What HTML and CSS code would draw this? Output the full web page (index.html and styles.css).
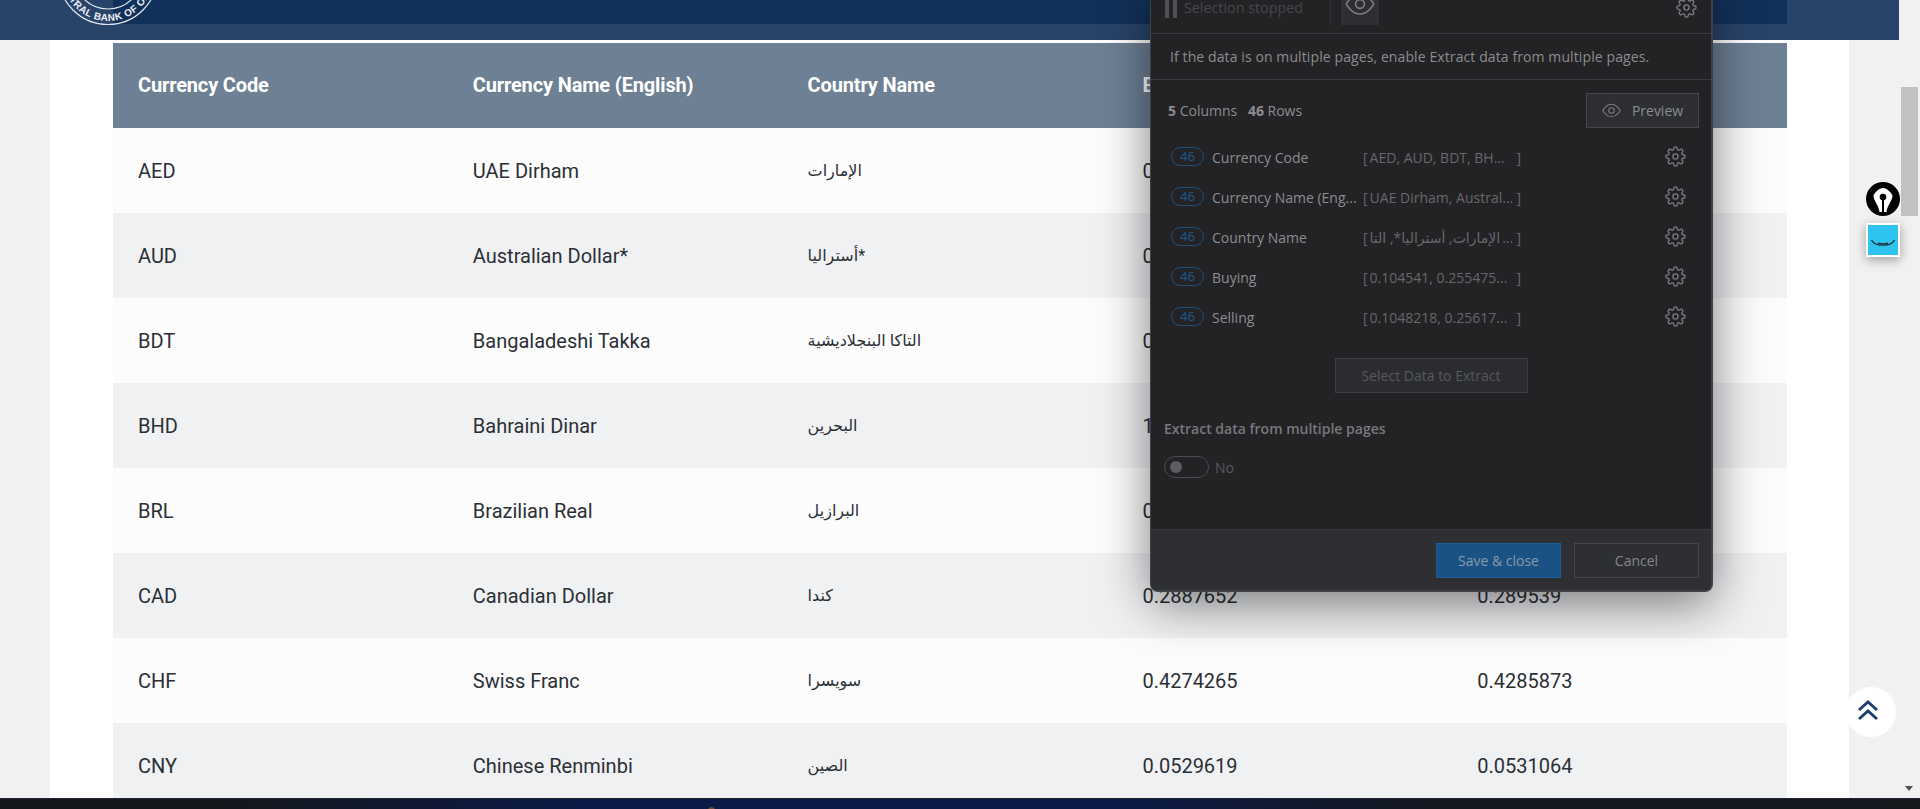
FILE: index.html
```html
<!DOCTYPE html>
<html lang="en">
<head>
<meta charset="utf-8">
<title>Exchange Rates</title>
<link rel="stylesheet" href="styles.css">
</head>
<body>
<div class="screen">
  <div class="viewport">
    <main class="page">
      <header class="topbar">
        <svg class="seal" viewBox="0 0 120 40" width="120" height="40" aria-hidden="true">
          <defs><path id="sealarc" d="M14 -25 A46 46 0 0 0 106 -25"/></defs>
          <circle cx="60" cy="-25" r="49.5" class="seal-ring"/>
          <circle cx="60" cy="-25" r="34" class="seal-ring"/>
          <text class="seal-text"><textPath href="#sealarc" startOffset="50%" text-anchor="middle">CENTRAL BANK OF OMAN</textPath></text>
        </svg>
        <div class="topbar-inner"></div>
      </header>
      <section class="sheet">
        <table class="rates">
          <thead>
            <tr><th>Currency Code</th><th>Currency Name (English)</th><th>Country Name</th><th>Buying</th><th>Selling</th></tr>
          </thead>
          <tbody>
            <tr><td>AED</td><td>UAE Dirham</td><td>الإمارات</td><td>0.104541</td><td>0.1048218</td></tr>
            <tr><td>AUD</td><td>Australian Dollar*</td><td>أستراليا*</td><td>0.255475</td><td>0.25617</td></tr>
            <tr><td>BDT</td><td>Bangaladeshi Takka</td><td>التاكا البنجلاديشية</td><td>0.0031</td><td>0.0032</td></tr>
            <tr><td>BHD</td><td>Bahraini Dinar</td><td>البحرين</td><td>1.0185</td><td>1.0212</td></tr>
            <tr><td>BRL</td><td>Brazilian Real</td><td>البرازيل</td><td>0.0702</td><td>0.0708</td></tr>
            <tr><td>CAD</td><td>Canadian Dollar</td><td>كندا</td><td>0.2887652</td><td>0.289539</td></tr>
            <tr><td>CHF</td><td>Swiss Franc</td><td>سويسرا</td><td>0.4274265</td><td>0.4285873</td></tr>
            <tr><td>CNY</td><td>Chinese Renminbi</td><td>الصين</td><td>0.0529619</td><td>0.0531064</td></tr>
          </tbody>
        </table>
      </section>
    </main>
    <aside class="scrollbar">
      <div class="thumb"></div>
      <div class="arrow-down"></div>
    </aside>
  </div>
  <footer class="taskbar"><span class="taskdot"></span></footer>

  <section class="modal">
    <div class="toolbar">
      <span class="pause"><i></i><i></i></span>
      <span class="stopped">Selection stopped</span>
      <span class="tooldiv"></span>
      <span class="eyebtn">
        <svg viewBox="0 0 24 24" width="30" height="30" class="ico ico-thin"><path d="M1 12s4-8 11-8 11 8 11 8-4 8-11 8-11-8-11-8z"/><circle cx="12" cy="12" r="3.5"/></svg>
      </span>
      <svg class="ico gear gear-top" viewBox="0 0 24 24" width="21" height="21"><use href="#gearshape"/></svg>
    </div>
    <div class="hint">If the data is on multiple pages, enable Extract data from multiple pages.</div>
    <div class="summary">
      <span class="counts"><b>5</b> Columns <b class="rows-n">46</b> Rows</span>
      <span class="preview">
        <svg viewBox="0 0 24 24" width="19" height="19" class="ico ico-thin"><path d="M1 12s4-8 11-8 11 8 11 8-4 8-11 8-11-8-11-8z"/><circle cx="12" cy="12" r="3.5"/></svg>
        Preview
      </span>
    </div>
    <ul class="fields">
      <li class="field"><span class="badge">46</span><span class="fname">Currency Code</span><span class="fvalue"><span>[</span><span class="ftext">AED, AUD, BDT, BH...</span><span>]</span></span><svg class="ico gear" viewBox="0 0 24 24" width="21" height="21"><use href="#gearshape"/></svg></li>
      <li class="field"><span class="badge">46</span><span class="fname">Currency Name (Eng...</span><span class="fvalue"><span>[</span><span class="ftext">UAE Dirham, Austral...</span><span>]</span></span><svg class="ico gear" viewBox="0 0 24 24" width="21" height="21"><use href="#gearshape"/></svg></li>
      <li class="field"><span class="badge">46</span><span class="fname">Country Name</span><span class="fvalue"><span>[</span><span class="ftext" dir="rtl">الإمارات, أستراليا*, التا</span><span class="fdots">...</span><span>]</span></span><svg class="ico gear" viewBox="0 0 24 24" width="21" height="21"><use href="#gearshape"/></svg></li>
      <li class="field"><span class="badge">46</span><span class="fname">Buying</span><span class="fvalue"><span>[</span><span class="ftext">0.104541, 0.255475...</span><span>]</span></span><svg class="ico gear" viewBox="0 0 24 24" width="21" height="21"><use href="#gearshape"/></svg></li>
      <li class="field"><span class="badge">46</span><span class="fname">Selling</span><span class="fvalue"><span>[</span><span class="ftext">0.1048218, 0.25617...</span><span>]</span></span><svg class="ico gear" viewBox="0 0 24 24" width="21" height="21"><use href="#gearshape"/></svg></li>
    </ul>
    <div class="selectwrap"><span class="selectbtn">Select Data to Extract</span></div>
    <div class="multi-title">Extract data from multiple pages</div>
    <div class="multi-toggle"><span class="switch"><i></i></span><span class="switch-label">No</span></div>
    <div class="modal-foot">
      <span class="btn btn-save">Save &amp; close</span>
      <span class="btn btn-cancel">Cancel</span>
    </div>
  </section>

  <svg class="defs" width="0" height="0" aria-hidden="true">
    <defs>
      <g id="gearshape"><circle cx="12" cy="12" r="3"/><path d="M19.4 15a1.65 1.65 0 0 0 .33 1.82l.06.06a2 2 0 0 1 0 2.83 2 2 0 0 1-2.83 0l-.06-.06a1.65 1.65 0 0 0-1.82-.33 1.65 1.65 0 0 0-1 1.51V21a2 2 0 0 1-2 2 2 2 0 0 1-2-2v-.09A1.65 1.65 0 0 0 9 19.4a1.65 1.65 0 0 0-1.82.33l-.06.06a2 2 0 0 1-2.83 0 2 2 0 0 1 0-2.83l.06-.06a1.65 1.65 0 0 0 .33-1.82 1.65 1.65 0 0 0-1.51-1H3a2 2 0 0 1-2-2 2 2 0 0 1 2-2h.09A1.65 1.65 0 0 0 4.6 9a1.65 1.65 0 0 0-.33-1.82l-.06-.06a2 2 0 0 1 0-2.83 2 2 0 0 1 2.83 0l.06.06a1.65 1.65 0 0 0 1.82.33H9a1.65 1.65 0 0 0 1-1.51V3a2 2 0 0 1 2-2 2 2 0 0 1 2 2v.09a1.65 1.65 0 0 0 1 1.51 1.65 1.65 0 0 0 1.82-.33l.06-.06a2 2 0 0 1 2.83 0 2 2 0 0 1 0 2.83l-.06.06a1.65 1.65 0 0 0-.33 1.82V9a1.65 1.65 0 0 0 1.51 1H21a2 2 0 0 1 2 2 2 2 0 0 1-2 2h-.09a1.65 1.65 0 0 0-1.51 1z"/></g>
    </defs>
  </svg>

  <div class="pen-btn">
    <svg viewBox="0 0 34 34" width="34" height="34"><circle cx="17" cy="17" r="17" fill="#000"/><path d="M17 6C13 6 8 11 7.500 14 7.500 18 12.500 23 13.500 30H20.500C21.500 23 26.500 18 26.500 14 26 11 21 6 17 6z" fill="#fff"/><circle cx="17" cy="15" r="3.300" fill="#000"/><rect x="16" y="15" width="2" height="15" fill="#000"/></svg>
  </div>
  <div class="smile-btn">
    <svg viewBox="0 0 30 30" width="30" height="30"><path d="M3.500 15C7 22 23 22 26.500 15" fill="none" stroke="#1c2a3a" stroke-width="1.200"/><path d="M10 18C13 19 17 19 20 18" fill="none" stroke="#1c2a3a" stroke-width="1.200"/></svg>
  </div>
  <div class="top-btn">
    <svg viewBox="0 0 24 22" width="24" height="22"><path d="M3 11 12 3l9 8M3 20l9-8 9 8" fill="none" stroke="#1d3f6e" stroke-width="3"/></svg>
  </div>
</div>
</body>
</html>
```
FILE: styles.css
```css
* { box-sizing: border-box; }
html, body { margin: 0; padding: 0; height: 100%; overflow: hidden; }
body { font-family: Roboto, "Noto Sans", sans-serif; background: #f1f1f1; }

.screen { position: relative; width: 1920px; height: 809px; overflow: hidden; display: flex; flex-direction: column; }
.viewport { display: flex; height: 798px; }
.page { width: 1899px; height: 798px; overflow: hidden; background: #f1f1f1; }

.topbar { position: relative; height: 40px; background: #29446a; }
.topbar-inner { width: 1674px; height: 24px; margin-left: 113px; background: #12315a; }
.seal { position: absolute; left: 48px; top: 0; z-index: 1; }
.seal-ring { fill: none; stroke: #dfe5ec; stroke-width: 1.2; }
.seal-text { fill: #e8edf2; font-family: "Liberation Sans", sans-serif; font-size: 10px; font-weight: 700; letter-spacing: .4px; }

.sheet { width: 1799px; height: 758px; margin-left: 50px; padding: 3px 62px 0 63px; background: #fff; }
.rates { width: 1674px; border-collapse: collapse; table-layout: fixed; font-family: Roboto, "DejaVu Sans", sans-serif; }
.rates th { height: 85px; padding: 0 25px 2px; background: #6d8094; color: #fff; font-size: 20px; font-weight: 700; letter-spacing: -.15px; text-align: left; }
.rates td { height: 85px; padding: 0 25px; color: #2b2f36; font-size: 20px; text-align: left; }
.rates td:nth-child(3) { font-size: 16px; }
.rates tbody tr:nth-child(odd) { background: #fcfcfc; }
.rates tbody tr:nth-child(even) { background: #f0f1f3; }

.scrollbar { position: relative; width: 21px; height: 798px; background: #f1f1f1; }
.thumb { position: absolute; left: 2px; top: 87px; width: 17px; height: 129px; background: #c1c1c1; }
.arrow-down { position: absolute; left: 6px; top: 786px; width: 0; height: 0; border-left: 4.500px solid transparent; border-right: 4.500px solid transparent; border-top: 5px solid #505050; }

.taskbar { position: relative; height: 11px; background: linear-gradient(90deg, #14171c 0%, #14171c 12%, #0b1a46 30%, #0b1a46 58%, #15181f 75%, #14171c 100%); border-top: 1px solid #1c2330; }
.taskdot { position: absolute; left: 708px; top: 8px; width: 7px; height: 7px; border-radius: 50%; background: #6b4a3a; }

.modal { position: absolute; left: 1150px; top: -17px; width: 563px; height: 609px; display: flex; flex-direction: column; background: #232325; border: 1px solid #3f4146; border-width: 0 2px 2px 1px; border-radius: 0 0 8px 8px; box-shadow: 0 12px 50px rgba(0, 0, 0, .5); font-family: "Open Sans", "DejaVu Sans", sans-serif; color: #8b8d90; font-size: 14px; }

.ico { fill: none; stroke: #7b7d80; stroke-width: 1.500; }
.ico-thin { stroke-width: 1.300; }

.toolbar { position: relative; display: flex; align-items: flex-start; flex: none; height: 51px; padding: 0 0 0 14px; border-bottom: 1px solid #3a3b3f; }
.pause { display: flex; gap: 4px; margin-top: 17px; height: 18px; }
.pause i { width: 4px; height: 18px; background: #4f5053; }
.stopped { flex: none; width: 146px; margin: 15px 0 0 7px; font-size: 14.300px; line-height: 20px; color: #46474a; white-space: nowrap; }
.tooldiv { flex: none; width: 1px; height: 30px; margin: 12px 0 0; background: #333438; }
.eyebtn { display: flex; align-items: center; justify-content: center; width: 38px; height: 42px; margin: 0 0 0 10px; background: #2e2f33; align-self: flex-start; }
.gear { flex: none; }
.gear-top { position: absolute; left: 525px; top: 14px; }

.hint { flex: none; height: 46px; padding: 0 0 0 19px; display: flex; align-items: center; letter-spacing: .1px; border-bottom: 1px solid #3a3b3f; }

.summary { flex: none; display: flex; justify-content: space-between; padding: 13px 12px 0 17px; align-items: center; }
.counts b { font-weight: 700; }
.rows-n { margin-left: 7px; }
.preview { display: flex; align-items: center; justify-content: center; gap: 11px; width: 113px; height: 35px; background: #2e2f33; border: 1px solid #44464a; }

.fields { list-style: none; margin: 9px 0 0; padding: 0; flex: none; }
.field { display: flex; align-items: center; height: 40px; padding: 0 0 0 20px; }
.badge { flex: none; width: 33px; height: 19px; margin-top: -2px; border: 1px solid #1d4f80; border-radius: 10px; color: #1f5a91; font-size: 13px; line-height: 16px; text-align: center; }
.fname { flex: none; width: 151px; margin-left: 8px; white-space: nowrap; overflow: hidden; }
.fvalue { flex: none; display: flex; width: 158px; gap: 2px; color: #66686b; white-space: nowrap; }
.ftext { flex: 1; overflow: hidden; }
.ftext[dir="rtl"] { flex: none; }
.fdots { flex: 1; }
.field .gear { margin: -2px 0 0 144px; }

.selectwrap { flex: none; display: flex; justify-content: center; margin-top: 21px; }
.selectbtn { display: flex; align-items: center; justify-content: center; width: 193px; height: 35px; background: #2b2c30; border: 1px solid #3d3e42; color: #58595c; }

.multi-title { flex: none; margin: 26px 0 0 13px; line-height: 20px; font-weight: 600; color: #77797c; }
.multi-toggle { flex: none; display: flex; align-items: center; margin: 17px 0 0 13px; height: 22px; }
.switch { display: flex; align-items: center; width: 45px; height: 22px; padding-left: 5px; border: 1px solid #4b4c4f; border-radius: 11px; }
.switch i { width: 12px; height: 12px; border-radius: 50%; background: #5c5d60; }
.switch-label { margin-left: 6px; color: #58595c; }

.modal-foot { flex: none; display: flex; justify-content: flex-end; gap: 13px; margin-top: 51px; padding: 13px 12px 12px 0; background: #2e2f33; border-top: 1px solid #3a3b3f; border-radius: 0 0 7px 7px; }
.btn { display: flex; align-items: center; justify-content: center; width: 125px; height: 35px; }
.btn-save { background: #1b5285; border: 1px solid #1d5c96; color: #8a9aa8; }
.btn-cancel { border: 1px solid #44464a; color: #85878a; }

.defs { position: absolute; }
.pen-btn { position: absolute; left: 1866px; top: 182px; width: 34px; height: 34px; }
.pen-btn svg { display: block; }
.smile-btn { position: absolute; left: 1866px; top: 223px; width: 34px; height: 34px; background: #2fc4ee; border: 2px solid #fff; box-shadow: 0 3px 10px rgba(0, 0, 0, .35); }
.smile-btn svg { display: block; }
.top-btn { position: absolute; left: 1846px; top: 687px; width: 50px; height: 50px; display: flex; align-items: center; justify-content: center; padding: 0 7px 4px 0; background: #fff; border-radius: 50%; }
```
